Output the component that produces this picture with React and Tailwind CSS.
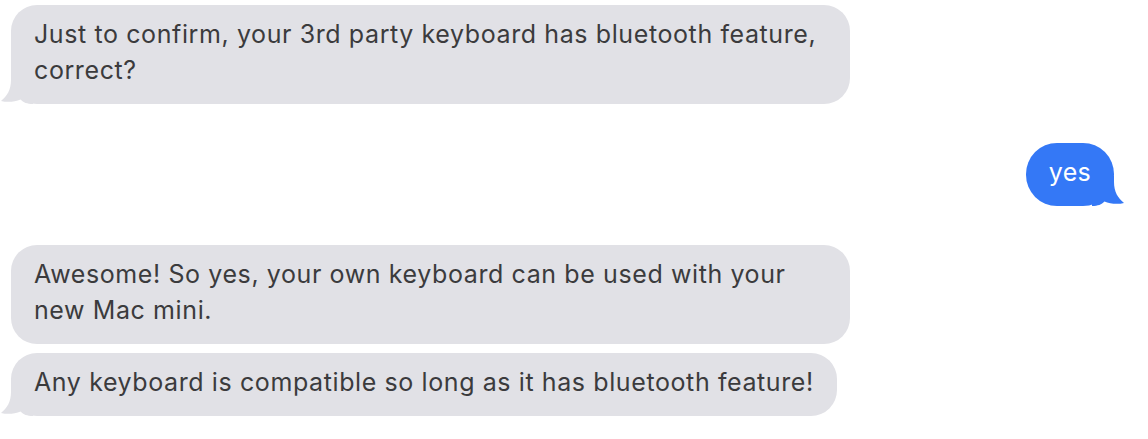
import React from "react";

const Tail = ({ color, side }) => (
  <svg
    width="32"
    height="30"
    viewBox="0 0 32 30"
    className={
      side === "left"
        ? "absolute bottom-0 left-[-10px]"
        : "absolute bottom-0 right-[-10px] scale-x-[-1]"
    }
  >
    <path
      d="M10 0 L32 0 L32 30 C26 30 22.5 28.5 19.5 25.5 C14 28 6 28.5 0 27 C6 22 10 16 10 6 Z"
      fill={color}
    />
  </svg>
);

const Bubble = ({ text, me, tail }) => (
  <div
    className={
      me
        ? "relative self-end rounded-[31px] bg-[#3478f6] pl-[23px] pr-[23px] pt-[11px] pb-[16px] tracking-[0.3px] text-white"
        : "relative self-start max-w-[839px] rounded-[26px] bg-[#e1e1e6] pl-[23px] pr-[23px] pt-[11px] pb-[16px] text-[#3b3b3d]"
    }
  >
    {tail && <Tail color={me ? "#3478f6" : "#e1e1e6"} side={me ? "right" : "left"} />}
    <p className="relative">{text}</p>
  </div>
);

export default function App() {
  return (
    <div
      className="flex h-[439px] w-[1148px] flex-col bg-white pl-[11px] pr-[34px] pt-[5px] text-[25px] leading-[36px] tracking-[0.6px]"
      style={{ fontFamily: "Inter, 'Noto Sans', sans-serif" }}
    >
      <Bubble
        text="Just to confirm, your 3rd party keyboard has bluetooth feature, correct?"
        tail
      />
      <div className="mt-[39px] flex flex-col">
        <Bubble text="yes" me tail />
      </div>
      <div className="mt-[39px] flex flex-col gap-[9px]">
        <Bubble text="Awesome! So yes, your own keyboard can be used with your new Mac mini." />
        <Bubble
          text="Any keyboard is compatible so long as it has bluetooth feature!"
          tail
        />
      </div>
    </div>
  );
}
